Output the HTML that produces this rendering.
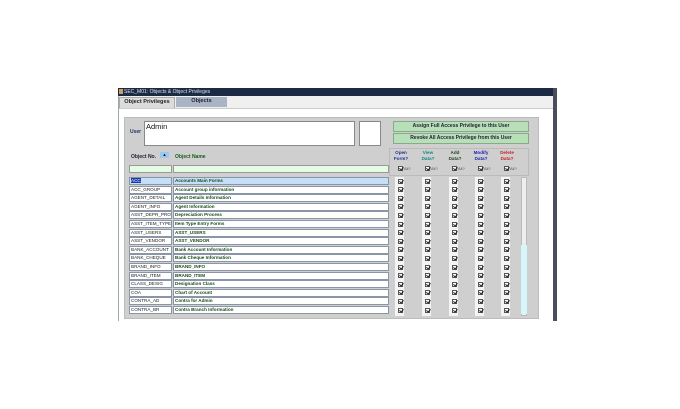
<!DOCTYPE html>
<html><head><style>
*{margin:0;padding:0;box-sizing:border-box}
body{width:680px;height:409px;background:#fff;position:relative;overflow:hidden;font-family:"Liberation Sans",Arial,sans-serif}
.a{position:absolute}
.t{font-size:5px;font-weight:bold;white-space:nowrap}
.cell{position:absolute;height:8px;background:#fff;border:1px solid #8a96a8;font-size:4.6px;line-height:6px;padding-left:1px;white-space:nowrap;overflow:hidden}
.cb{position:absolute;width:5px;height:5px;border:1px solid #555;background:#fff}
.cb:after{content:"";position:absolute;left:1px;top:-1px;width:1.5px;height:3px;border-right:1px solid #222;border-bottom:1px solid #222;transform:rotate(40deg)}
</style></head><body>
<div class="a" style="left:118px;top:88px;width:436px;height:8px;background:#1c2a44"></div>
<div class="a" style="left:119px;top:89px;width:4px;height:5px;background:#c8a060"></div>
<div class="a t" style="left:124px;top:89px;color:#dfe4ec;font-weight:normal;font-size:5px">SEC_M01: Objects &amp; Object Privileges</div>
<div class="a" style="left:553px;top:88px;width:4px;height:233px;background:#4a4e58"></div>
<div class="a" style="left:118px;top:96px;width:1px;height:225px;background:#9aa"></div>
<div class="a" style="left:119px;top:96px;width:434px;height:12px;background:#f0f0f0"></div>
<div class="a t" style="left:119px;top:97px;width:56px;height:11px;background:#dcdcdc;border:1px solid #aaa;border-bottom:none;font-size:5.6px;line-height:9px;text-align:center;color:#222">Object Privileges</div>
<div class="a t" style="left:176px;top:97px;width:51px;height:10px;background:#a9b4c4;font-size:5.6px;line-height:9px;text-align:center;color:#223">Objects</div>
<div class="a" style="left:119px;top:108px;width:434px;height:1px;background:#ccc"></div>
<div class="a" style="left:124px;top:117px;width:415px;height:202px;background:#cfcfcf;border:1px solid #bbb"></div>
<div class="a t" style="left:130px;top:129px;color:#223366">User</div>
<div class="a" style="left:144px;top:121px;width:211px;height:25px;background:#fff;border:1px solid #888"></div>
<div class="a" style="left:146px;top:122px;font-size:7.5px;color:#111">Admin</div>
<div class="a" style="left:359px;top:121px;width:22px;height:25px;background:#fff;border:1px solid #888"></div>
<div class="a t" style="left:393px;top:121px;width:136px;height:11px;background:#b8e0b8;border:1px solid #8a8;text-align:center;line-height:9px;color:#223">Assign Full Access Privilege to this User</div>
<div class="a t" style="left:393px;top:133px;width:136px;height:11px;background:#b8e0b8;border:1px solid #8a8;text-align:center;line-height:9px;color:#223">Revoke All Access Privilege from this User</div>
<div class="a" style="left:389px;top:148px;width:140px;height:28px;border:1px solid #bbb"></div>
<div class="a t" style="left:131px;top:154px;color:#223">Object No.</div>
<div class="a" style="left:160px;top:152px;width:9px;height:6px;background:#9cc8ee;font-size:4px;text-align:center;line-height:6px">▲</div>
<div class="a t" style="left:175px;top:154px;color:#1a5a1a">Object Name</div>
<div class="a" style="left:129px;top:165px;width:43px;height:8px;background:#e4fbe4;border:1px solid #999"></div>
<div class="a" style="left:173px;top:165px;width:216px;height:8px;background:#e4fbe4;border:1px solid #999"></div>
<div id="hdr"></div>
<div id="rows"></div>
<div class="a" style="left:521px;top:177px;width:6px;height:139px;background:#eee;border:1px solid #bbb"></div>
<div class="a" style="left:521px;top:245px;width:6px;height:69px;background:#d6f6fb"></div>
<script>
var codes=["ACC","ACC_GROUP","AGENT_DETAIL","AGENT_INFO","ASST_DEPR_PROC","ASST_ITEM_TYPE","ASST_USERS","ASST_VENDOR","BANK_ACCOUNT","BANK_CHEQUE","BRAND_INFO","BRAND_ITEM","CLASS_DESIG","COA","CONTRA_AD","CONTRA_BR"];
var names=["Accounts Main Forms","Account group information","Agent Details Information","Agent Information","Depreciation Process","Item Type Entry Forms","ASST_USERS","ASST_VENDOR","Bank Account Information","Bank Cheque Information","BRAND_INFO","BRAND_ITEM","Designation Class","Chart of Account","Contra for Admin","Contra Branch Information"];
var cx=[399,426,453,479,505];
var hd=[["Open","Form?","#223399"],["View","Data?","#118888"],["Add","Data?","#224422"],["Modify","Data?","#2222bb"],["Delete","Data?","#cc2222"]];
var h="";
for(var j=0;j<5;j++){
 h+='<div class="a t" style="left:'+(cx[j]-8)+'px;top:150px;width:20px;text-align:center;color:'+hd[j][2]+';font-size:4.6px;line-height:6px">'+hd[j][0]+'<br>'+hd[j][1]+'</div>';
 h+='<div class="cb" style="left:'+(cx[j]-1)+'px;top:166px"></div><div class="a" style="left:'+(cx[j]+5)+'px;top:166px;font-size:4px;color:#363">All?</div>';
 h+='<div class="a" style="left:'+(cx[j]-4)+'px;top:177px;width:9px;height:139px;background:#f4f4f4"></div>';
}
document.getElementById('hdr').innerHTML=h;
var r="";
for(var i=0;i<16;i++){
 var y=177+i*8.6;
 var sel=i==0;
 r+='<div class="cell" style="left:129px;top:'+y+'px;width:43px;color:#222;'+(sel?'background:#c4e0f8':'')+'">'+(sel?'<span style="background:#1a3aa8;color:#fff">ACC</span>':codes[i])+'</div>';
 r+='<div class="cell" style="left:173px;top:'+y+'px;width:216px;color:#1a4a1a;font-weight:bold;'+(sel?'background:#c4e0f8':'')+'">'+names[i]+'</div>';
 for(var j=0;j<5;j++) r+='<div class="cb" style="left:'+(cx[j]-1)+'px;top:'+(y+1.5)+'px"></div>';
}
document.getElementById('rows').innerHTML=r;
</script>
</body></html>
